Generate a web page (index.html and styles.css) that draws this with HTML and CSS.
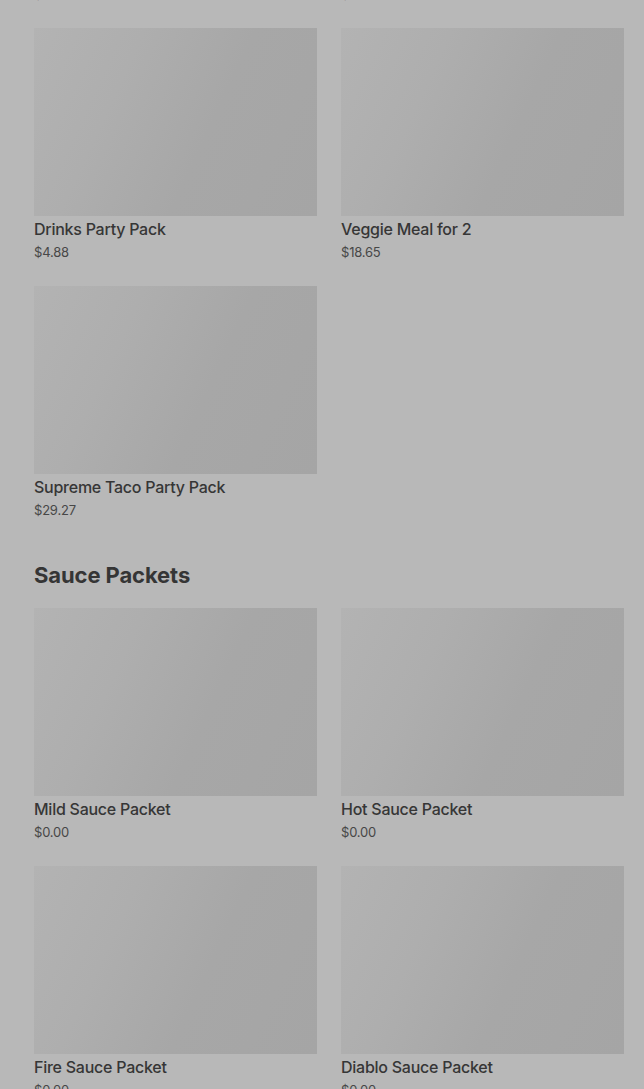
FILE: index.html
```html
<!DOCTYPE html>
<html lang="en">
<head>
<meta charset="utf-8">
<title>Menu</title>
<link rel="stylesheet" href="styles.css">
</head>
<body>
<main class="menu">
  <section class="section">
    <div class="grid">
      <div class="card"><div class="thumb"></div><div class="name">Family Taco Pack</div><div class="price">$20.49</div></div>
      <div class="card"><div class="thumb"></div><div class="name">Nachos Party Pack</div><div class="price">$22.19</div></div>
      <div class="card"><div class="thumb"></div><div class="name">Drinks Party Pack</div><div class="price">$4.88</div></div>
      <div class="card"><div class="thumb"></div><div class="name">Veggie Meal for 2</div><div class="price">$18.65</div></div>
      <div class="card"><div class="thumb"></div><div class="name">Supreme Taco Party Pack</div><div class="price">$29.27</div></div>
    </div>
  </section>
  <section class="section">
    <h2 class="section-title">Sauce Packets</h2>
    <div class="grid">
      <div class="card"><div class="thumb"></div><div class="name">Mild Sauce Packet</div><div class="price">$0.00</div></div>
      <div class="card"><div class="thumb"></div><div class="name">Hot Sauce Packet</div><div class="price">$0.00</div></div>
      <div class="card"><div class="thumb"></div><div class="name">Fire Sauce Packet</div><div class="price">$0.00</div></div>
      <div class="card"><div class="thumb"></div><div class="name">Diablo Sauce Packet</div><div class="price">$0.00</div></div>
    </div>
  </section>
</main>
</body>
</html>
```
FILE: styles.css
```css
html, body {
  margin: 0;
  padding: 0;
  background: #b8b8b8;
  font-family: Inter, Roboto, "Liberation Sans", sans-serif;
  color: #333333;
}
.menu {
  margin-top: -230px;
  padding: 0 20px 0 34px;
}
.section + .section {
  margin-top: 40px;
}
.section-title {
  margin: 0 0 17px;
  font-size: 22px;
  line-height: 32px;
  font-weight: 700;
  letter-spacing: -0.1px;
  color: #353535;
}
.grid {
  display: grid;
  grid-template-columns: 1fr 1fr;
  column-gap: 24px;
  row-gap: 25px;
}
.thumb {
  height: 188px;
  background: linear-gradient(115deg, #b3b3b3 0%, #aeaeae 30%, #a7a7a7 60%, #a5a5a5 100%);
}
.name {
  margin-top: 3px;
  font-size: 16px;
  line-height: 20px;
  font-weight: 500;
  letter-spacing: -0.25px;
  color: #363636;
}
.price {
  margin-top: 4px;
  font-size: 13px;
  line-height: 18px;
  letter-spacing: -0.2px;
  color: #474747;
}
```
